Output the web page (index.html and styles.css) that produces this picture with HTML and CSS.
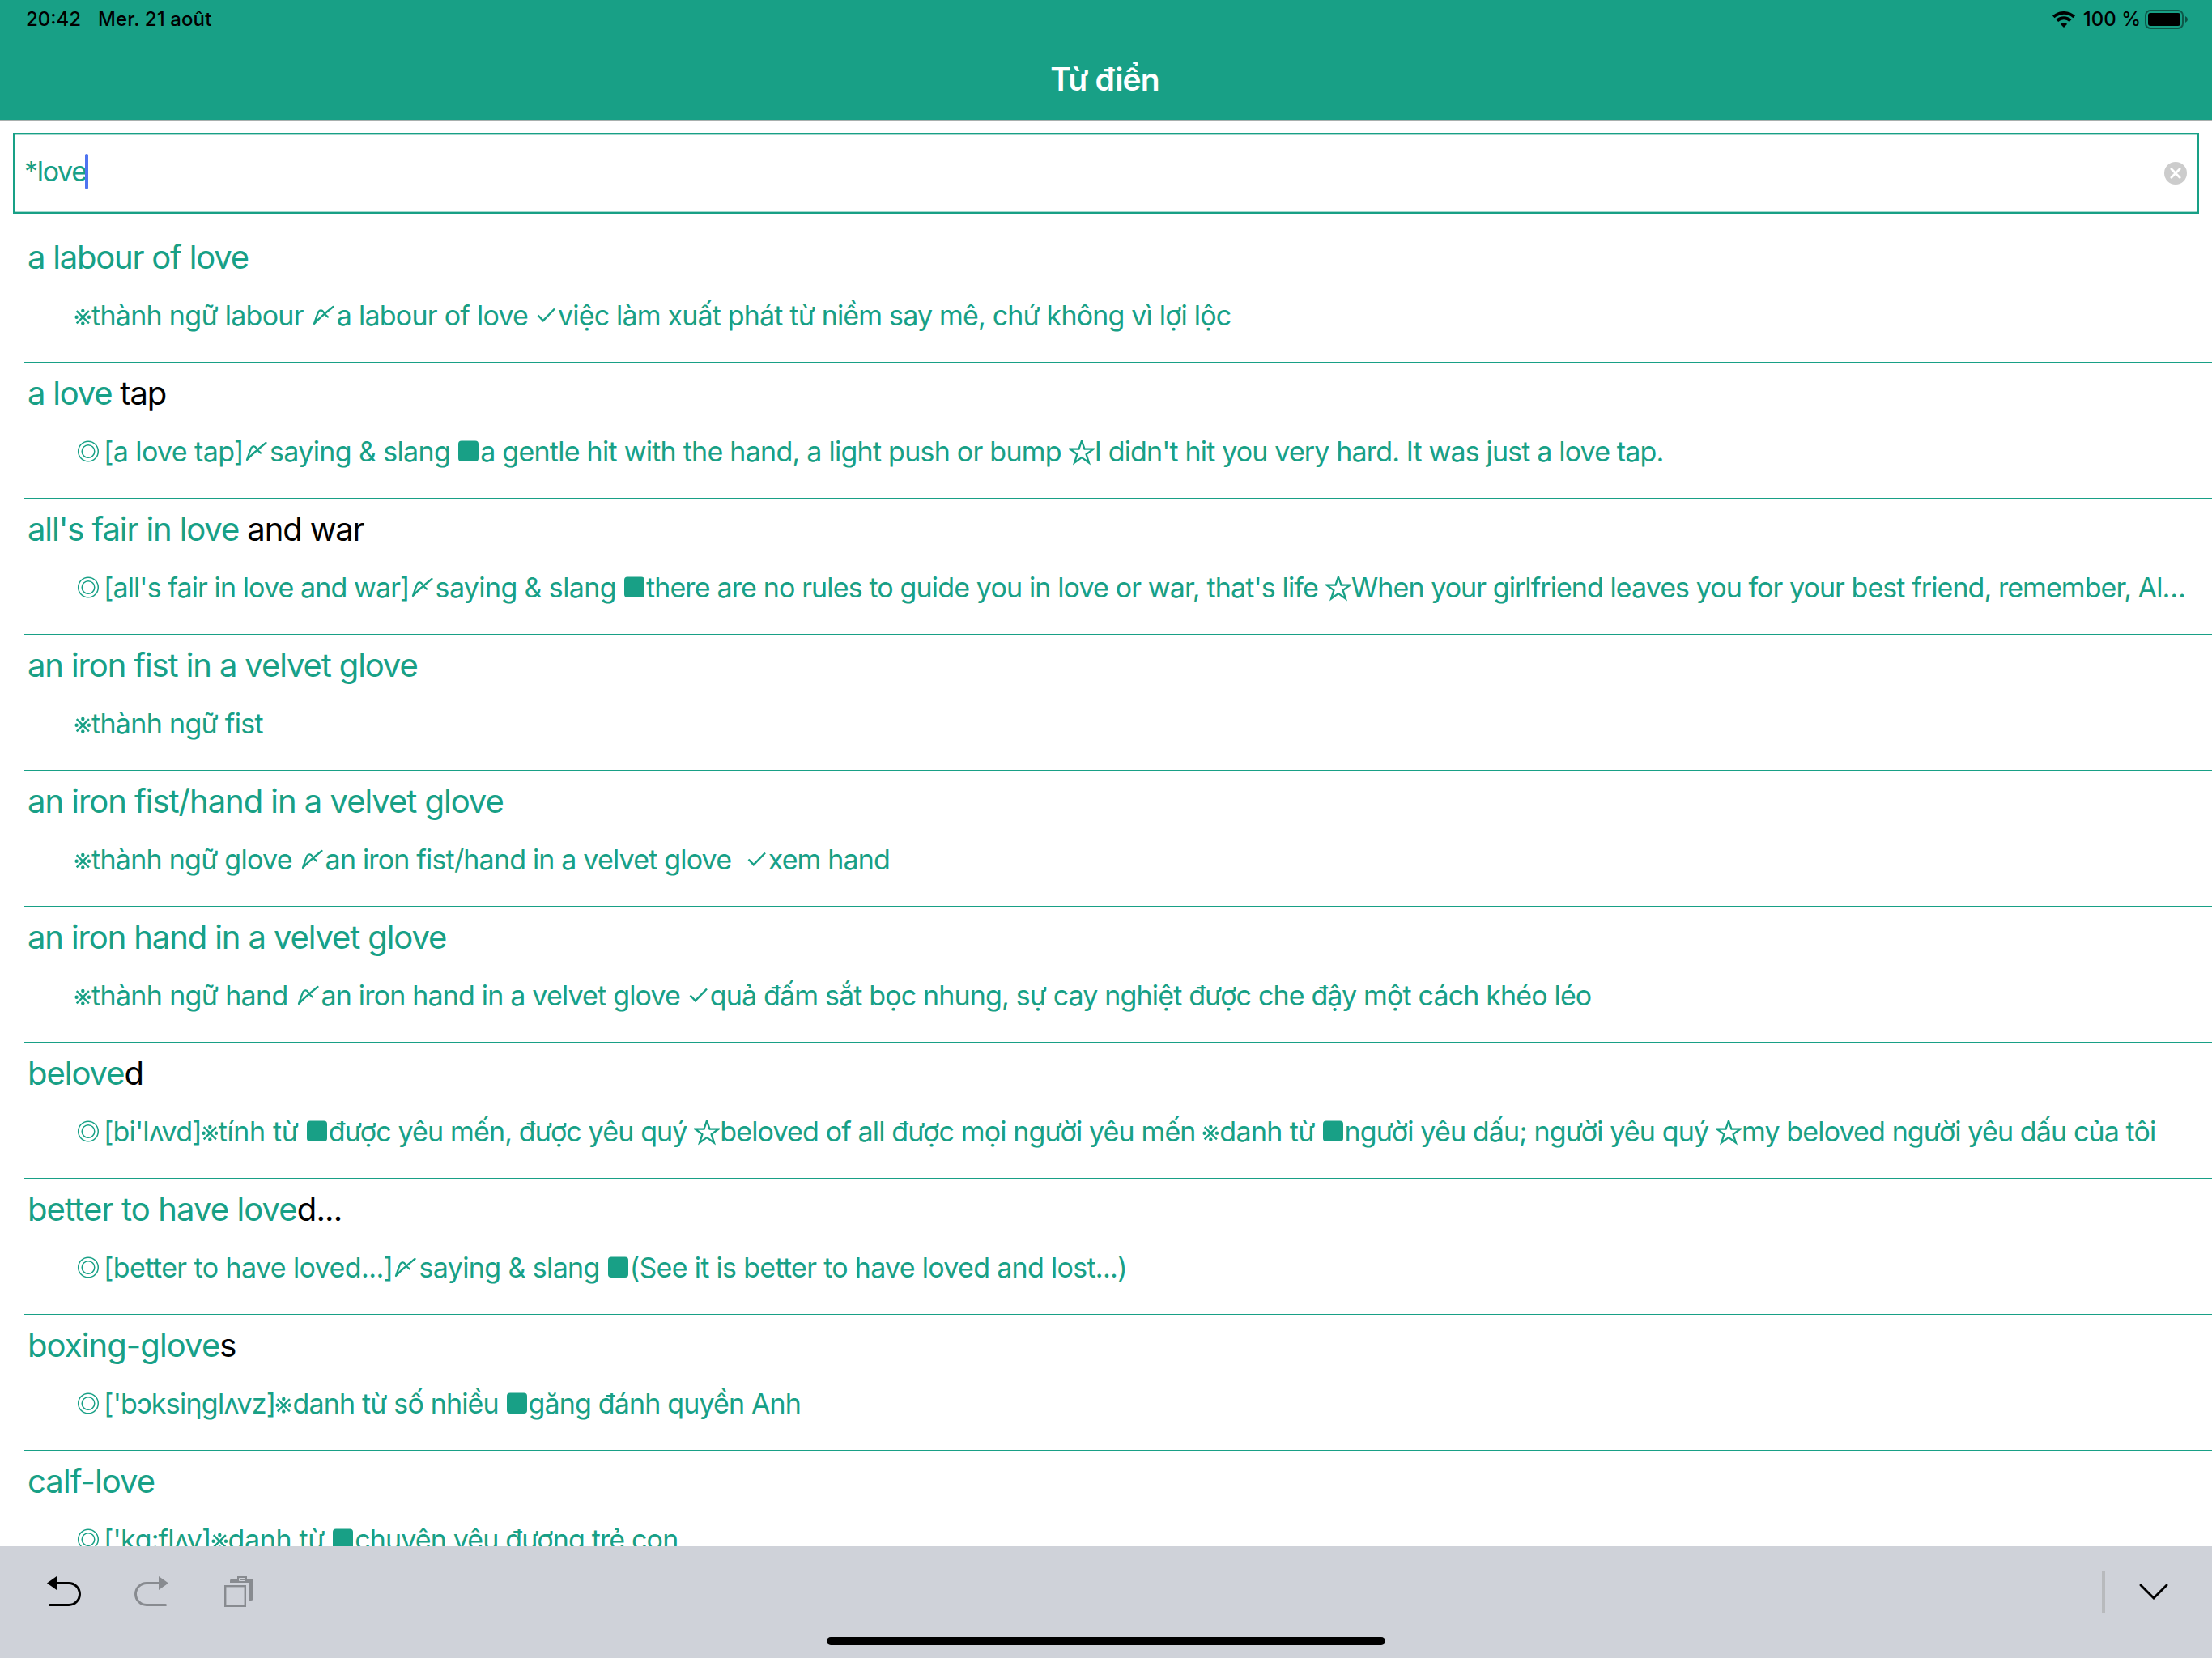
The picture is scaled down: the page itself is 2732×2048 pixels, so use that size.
FILE: index.html
```html
<!DOCTYPE html>
<html lang="vi">
<head>
<meta charset="utf-8">
<title>Từ điển</title>
<link rel="stylesheet" href="styles.css">
</head>
<body>
<svg class="defs" aria-hidden="true">
  <symbol id="ref" viewBox="0 0 21 34"><g fill="currentColor"><circle cx="10.300" cy="9" r="2.200"/><circle cx="10.300" cy="24.400" r="2.200"/><circle cx="2.600" cy="16.700" r="2.200"/><circle cx="18" cy="16.700" r="2.200"/></g><path d="M2.700 9.100l15.200 15.200M17.900 9.100L2.700 24.300" stroke="currentColor" stroke-width="2.400" fill="none"/></symbol>
  <symbol id="ring" viewBox="0 0 40 34"><g fill="none" stroke="currentColor" stroke-width="1.500"><circle cx="21" cy="14.500" r="12.300"/><circle cx="21" cy="14.500" r="7.800"/></g></symbol>
  <symbol id="shime" viewBox="0 0 32 34"><path d="M27.500 4C18 11.500 10 18 4 25 6 19.500 7.500 14 9.500 10 11.500 7.500 14 8 15.500 10.500 17 13 18.500 15 21 16.500" fill="none" stroke="currentColor" stroke-width="2.300" stroke-linecap="round" stroke-linejoin="round"/></symbol>
  <symbol id="check" viewBox="0 0 28 34"><path d="M3.500 14.500l6.300 6.600L24 6.500" fill="none" stroke="currentColor" stroke-width="2.500"/></symbol>
  <symbol id="box" viewBox="0 0 28 34"><rect x="1" y="1.500" width="25" height="25.500" rx="4" fill="currentColor"/></symbol>
  <symbol id="star" viewBox="0 0 32 34"><path d="M16 1.500l3.500 10.200h10.800l-8.700 6.400 3.300 10.400L16 22.100l-8.900 6.400 3.300-10.400-8.700-6.400h10.800z" fill="none" stroke="currentColor" stroke-width="2.300"/></symbol>
</svg>
<div class="screen">
  <header class="header">
    <div class="status">
      <span class="time">20:42</span><span class="date">Mer. 21 août</span>
      <svg class="wifi" viewBox="0 0 28 20"><path d="M14 20l-4.200-4.200a6.300 6.300 0 0 1 8.400 0z"/><path d="M1.300 6.900a18.600 18.600 0 0 1 25.400 0M5.800 11.500a12 12 0 0 1 16.400 0" fill="none" stroke="#000" stroke-width="3.800"/></svg>
      <span class="percent">100 %</span>
      <svg class="battery" viewBox="0 0 54 24"><rect x="1" y="1" width="46" height="22" rx="6" fill="none" stroke="#000" stroke-opacity=".45" stroke-width="2"/><rect x="4" y="4" width="40" height="16" rx="3"/><path d="M50 8q3 1.300 3 4t-3 4z" fill-opacity=".5"/></svg>
    </div>
    <h1 class="title">Từ điển</h1>
  </header>
  <div class="search"><div class="field">
    <span class="query">*love</span><span class="caret"></span>
    <svg class="clear" viewBox="0 0 28 28"><circle cx="14" cy="14" r="14" fill="#ccc"/><path d="M8.800 8.800l10.400 10.400M19.200 8.800L8.800 19.200" stroke="#fff" stroke-width="2.800" stroke-linecap="round"/></svg>
  </div></div>
  <main class="list">
    <article class="row"><h2><b>a labour of love</b></h2><p><svg class="i ref"><use href="#ref"/></svg><span>thành ngữ labour </span><svg class="i shime"><use href="#shime"/></svg><span>a labour of love </span><svg class="i check"><use href="#check"/></svg><span>việc làm xuất phát từ niềm say mê, chứ không vì lợi lộc</span></p></article>
    <article class="row"><h2><b>a love</b> tap</h2><p><svg class="i ring"><use href="#ring"/></svg><span>[a love tap]</span><svg class="i shime"><use href="#shime"/></svg><span>saying &amp; slang </span><svg class="i box"><use href="#box"/></svg><span>a gentle hit with the hand, a light push or bump </span><svg class="i star"><use href="#star"/></svg><span>I didn't hit you very hard. It was just a love tap.</span></p></article>
    <article class="row"><h2><b>all's fair in love</b> and war</h2><p><svg class="i ring"><use href="#ring"/></svg><span>[all's fair in love and war]</span><svg class="i shime"><use href="#shime"/></svg><span>saying &amp; slang </span><svg class="i box"><use href="#box"/></svg><span>there are no rules to guide you in love or war, that's life </span><svg class="i star"><use href="#star"/></svg><span>When your girlfriend leaves you for your best friend, remember, Al…</span></p></article>
    <article class="row"><h2><b>an iron fist in a velvet glove</b></h2><p><svg class="i ref"><use href="#ref"/></svg><span>thành ngữ fist</span></p></article>
    <article class="row"><h2><b>an iron fist/hand in a velvet glove</b></h2><p><svg class="i ref"><use href="#ref"/></svg><span>thành ngữ glove </span><svg class="i shime"><use href="#shime"/></svg><span>an iron fist/hand in a velvet glove  </span><svg class="i check"><use href="#check"/></svg><span>xem hand</span></p></article>
    <article class="row"><h2><b>an iron hand in a velvet glove</b></h2><p><svg class="i ref"><use href="#ref"/></svg><span>thành ngữ hand </span><svg class="i shime"><use href="#shime"/></svg><span>an iron hand in a velvet glove </span><svg class="i check"><use href="#check"/></svg><span>quả đấm sắt bọc nhung, sự cay nghiệt được che đậy một cách khéo léo</span></p></article>
    <article class="row"><h2><b>belove</b>d</h2><p><svg class="i ring"><use href="#ring"/></svg><span>[bi'lʌvd]</span><svg class="i ref"><use href="#ref"/></svg><span>tính từ </span><svg class="i box"><use href="#box"/></svg><span>được yêu mến, được yêu quý </span><svg class="i star"><use href="#star"/></svg><span>beloved of all được mọi người yêu mến </span><svg class="i ref"><use href="#ref"/></svg><span>danh từ </span><svg class="i box"><use href="#box"/></svg><span>người yêu dấu; người yêu quý </span><svg class="i star"><use href="#star"/></svg><span>my beloved người yêu dấu của tôi</span></p></article>
    <article class="row"><h2><b>better to have love</b>d...</h2><p><svg class="i ring"><use href="#ring"/></svg><span>[better to have loved...]</span><svg class="i shime"><use href="#shime"/></svg><span>saying &amp; slang </span><svg class="i box"><use href="#box"/></svg><span>(See it is better to have loved and lost...)</span></p></article>
    <article class="row"><h2><b>boxing-glove</b>s</h2><p><svg class="i ring"><use href="#ring"/></svg><span>['bɔksiηglʌvz]</span><svg class="i ref"><use href="#ref"/></svg><span>danh từ số nhiều </span><svg class="i box"><use href="#box"/></svg><span>găng đánh quyền Anh</span></p></article>
    <article class="row"><h2><b>calf-love</b></h2><p><svg class="i ring"><use href="#ring"/></svg><span>['kɑ:flʌv]</span><svg class="i ref"><use href="#ref"/></svg><span>danh từ </span><svg class="i box"><use href="#box"/></svg><span>chuyện yêu đương trẻ con</span></p></article>
  </main>
  <footer class="toolbar">
    <svg class="undo" viewBox="0 0 42 38"><path d="M0 8.500L12 0v17z"/><path d="M10 8.500h17a13.500 13.500 0 0 1 0 27H3.500" fill="none" stroke="#000" stroke-width="3" stroke-linecap="round"/></svg>
    <svg class="redo" viewBox="0 0 42 38"><path d="M42 8.500L30 0v17z" fill="#888b90"/><path d="M32 8.500H15a13.500 13.500 0 0 0 0 27h23.500" fill="none" stroke="#888b90" stroke-width="3" stroke-linecap="round"/></svg>
    <svg class="paste" viewBox="0 0 36 38"><path d="M7 8V6q0-3 3-3h6V0h12v3h5q3 0 3 3v21q0 3-3 3h-3V8z" fill="#888b90"/><path d="M18.500 2.500h7v3h-7z" fill="none" stroke="#d0d3da"/><path d="M0 8h30v30H0z" fill="#cfd2d9"/><rect x="1.200" y="12.200" width="24.600" height="24.600" fill="none" stroke="#888b90" stroke-width="2.400"/></svg>
    <span class="divider"></span>
    <svg class="hide" viewBox="0 0 36 20"><path d="M2 2l16 16L34 2" fill="none" stroke="#000" stroke-width="2.900" stroke-linecap="round"/></svg>
    <span class="home"></span>
  </footer>
</div>
</body>
</html>
```
FILE: styles.css
```css
* { box-sizing: border-box; }
body { margin: 0; background: #fff; font-family: Inter, "Noto Sans", "Noto Sans CJK JP", sans-serif; color: #000; }
.defs { display: none; }
.screen { display: flex; flex-direction: column; width: 2732px; height: 2048px; overflow: hidden; }
.header { flex: none; height: 149px; background: #18a086; border-bottom: 1px solid #a9b0ae; }
.status { display: flex; align-items: center; height: 48px; padding: 0 29px 0 32px; font-size: 24px; font-weight: 500; line-height: 48px; }
.date { margin-left: 21px; letter-spacing: 0.1px; }
.wifi { width: 28px; height: 20px; margin-left: auto; }
.percent { margin: 0 5px 0 10px; }
.battery { width: 54px; height: 24px; }
.title { margin: 0; height: 100px; padding-right: 3px; font-size: 39px; font-weight: 600; line-height: 100px; text-align: center; letter-spacing: -0.9px; color: #fff; }
.search { flex: none; height: 131px; padding: 15px 16px 16px; }
.field { display: flex; align-items: center; height: 100px; padding: 0 13px 0 12px; border: 2px solid #18a086; box-shadow: inset 0 0 0 1px #a6d9cf; color: #18a086; }
.query { padding-bottom: 4px; font-size: 34px; line-height: 40px; letter-spacing: -1.3px; }
.caret { width: 4px; height: 44px; margin: 0 0 4px -1.5px; border-radius: 2px; background: #4f74f0; }
.clear { width: 28px; height: 28px; margin-left: auto; }
.list { flex: 1; min-height: 0; overflow: hidden; padding-left: 30px; }
.row { height: 168px; padding: 14px 0 0 4px; border-bottom: 1px solid #18a086; white-space: pre; }
.row h2 { margin: 0; height: 48px; font-size: 40px; line-height: 48px; font-weight: 400; letter-spacing: -1.03px; }
.row b { font-weight: 400; color: #18a086; }
.row p { display: flex; align-items: center; margin: 0; height: 96px; padding: 0 0 0 54px; font-size: 34px; line-height: 44px; color: #18a086; letter-spacing: -0.85px; }
.i { flex: none; height: 34px; margin-top: 4px; }
.ref { width: 21px; }
.ref:first-child { margin-left: 4px; }
.ring { width: 40px; }
.shime { width: 32px; }
.check { width: 28px; }
.box { width: 28px; }
.star { width: 32px; }

/* Tracking of each headword and phrase */
.row:nth-child(1) h2, .row:nth-child(2) h2 { letter-spacing: -1.22px; }
.row:nth-child(3) h2, .row:nth-child(4) h2, .row:nth-child(6) h2 { letter-spacing: -1.12px; }
.row:nth-child(n+8) h2 { letter-spacing: -0.9px; }
.row .shime + span { letter-spacing: -0.62px; }
.row:nth-child(1) .ref + span { letter-spacing: -0.7px; }
.row:nth-child(1) .shime + span { letter-spacing: -0.75px; }
.row:nth-child(1) .check + span { letter-spacing: -0.82px; }
.row:nth-child(2) .ring + span { letter-spacing: -0.6px; }
.row:nth-child(2) .box + span { letter-spacing: -0.75px; }
.row:nth-child(3) .ring + span { letter-spacing: -0.9px; }
.row:nth-child(3) .box + span { letter-spacing: -0.86px; }
.row:nth-child(3) .star + span { letter-spacing: -0.94px; }
.row:nth-child(4) .ref + span { letter-spacing: -0.68px; }
.row:nth-child(5) .ref + span { letter-spacing: -0.73px; }
.row:nth-child(5) .shime + span { letter-spacing: -0.82px; }
.row:nth-child(6) .ref + span { letter-spacing: -0.65px; }
.row:nth-child(6) .shime + span { letter-spacing: -0.82px; }
.row:nth-child(n+7) .ref + span { letter-spacing: -0.35px; }
.row:nth-child(7) .star + span { letter-spacing: -0.87px; }
.row:nth-child(7) .star + span + .ref + span { letter-spacing: -0.65px; }
.row:nth-child(8) .ring + span { letter-spacing: -0.6px; }
.row:nth-child(8) .box + span { letter-spacing: -0.7px; }
.row:nth-child(9) .ring + span { letter-spacing: -0.75px; }
.row:nth-child(9) .ref + span { letter-spacing: -0.83px; }

.toolbar { flex: none; position: relative; display: flex; align-items: center; height: 138px; padding: 0 54px 26px 58px; background: #cfd2d9; }
.undo, .redo { width: 42px; height: 38px; }
.redo { margin-left: 66px; }
.paste { width: 36px; height: 38px; margin-left: 69px; }
.divider { width: 4px; height: 52px; margin-left: auto; background: #b8babd; }
.hide { width: 36px; height: 20px; margin-left: 42px; }
.home { position: absolute; left: 1021px; bottom: 16px; width: 690px; height: 10px; border-radius: 5px; background: #000; }
```
